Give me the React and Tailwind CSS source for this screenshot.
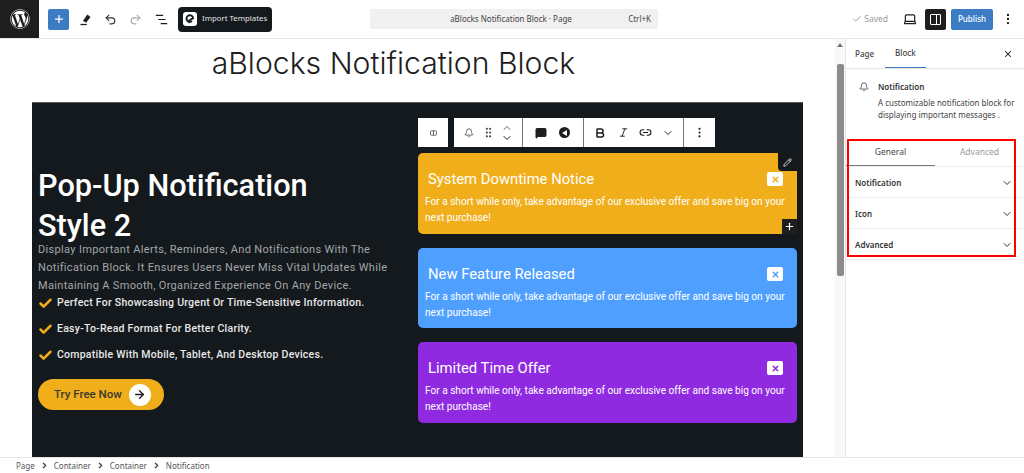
import { Plus, Undo2, Redo2, Check, Laptop, MoreVertical, X, Bell, ChevronDown, ChevronUp, ChevronRight, Bold, Italic, Link2, ArrowRight, Pencil, GripVertical, MessageSquare } from 'lucide-react'
import { FaWordpress } from 'react-icons/fa'

const CARDS = [
  { title: 'System Downtime Notice', bg: 'bg-[#f0ae1a]', x: 'text-[#f0ae1a]', h: 'h-[81px]' },
  { title: 'New Feature Released', bg: 'bg-[#4f9fff]', x: 'text-[#4f9fff]', h: 'h-[80px]' },
  { title: 'Limited Time Offer', bg: 'bg-[#902ae0]', x: 'text-[#902ae0]', h: 'h-[81px]' },
]

const FEATURES = [
  'Perfect For Showcasing Urgent Or Time-Sensitive Information.',
  'Easy-To-Read Format For Better Clarity.',
  'Compatible With Mobile, Tablet, And Desktop Devices.',
]

function Card({ title, bg, x, h, first }) {
  return (
    <div className={`relative ${h} ${bg} rounded-[5px] pl-[7px] pr-[14px] pt-[14px] text-white`}>
      <div className="flex items-center justify-between pl-[3px]">
        <span className="text-[14.8px] leading-[24px]">{title}</span>
        <span className="flex items-center justify-center w-[16px] h-[14px] bg-white rounded-[2px]">
          <X size={9} strokeWidth={4} className={x} />
        </span>
      </div>
      <p className="mt-[3px] text-[10.1px] leading-[15.5px] w-[366px]">
        For a short while only, take advantage of our exclusive offer and save big on your next purchase!
      </p>
      {first && (
        <>
          <span className="absolute top-0 right-0 w-[19px] h-[18px] bg-[#14191d] rounded-bl-[4px] flex items-center justify-center">
            <Pencil size={9} className="text-white" />
          </span>
          <span className="absolute bottom-0 right-0 w-[15px] h-[15px] bg-[#1e1e1e] flex items-center justify-center">
            <Plus size={11} strokeWidth={2.5} className="text-white" />
          </span>
        </>
      )}
    </div>
  )
}

function Toolbar() {
  return (
    <div className="flex h-[29px] gap-[6px] text-[#1e1e1e]">
      <div className="w-[30px] bg-white flex items-center justify-center">
        <svg viewBox="0 0 8 6" className="w-[7px] h-[6px]" fill="none" stroke="#555" strokeWidth="1">
          <rect x="0.5" y="0.5" width="7" height="5" rx="1" />
          <path d="M4 0.5v5" />
        </svg>
      </div>
      <div className="flex bg-white divide-x divide-[#777]">
        <div className="w-[69px] flex items-center pl-[10px]">
          <Bell size={10} className="text-[#444]" />
          <GripVertical size={13} className="ml-[8px] text-[#444]" />
          <div className="flex flex-col ml-[6px]">
            <ChevronUp size={12} className="text-[#666] -mb-[2px]" />
            <ChevronDown size={12} />
          </div>
        </div>
        <div className="w-[61px] flex items-center pl-[12px] gap-[12px]">
          <MessageSquare size={12} fill="#1e1e1e" />
          <span className="w-[11px] h-[11px] rounded-full bg-[#1e1e1e] flex items-center justify-center">
            <span className="w-0 h-0 border-y-[3px] border-y-transparent border-r-[5px] border-r-white" />
          </span>
        </div>
        <div className="w-[100px] flex items-center pl-[10px]">
          <Bold size={12} strokeWidth={3} />
          <Italic size={11} className="ml-[12px]" />
          <Link2 size={13} className="ml-[10px]" />
          <ChevronDown size={12} className="ml-[10px]" />
        </div>
        <div className="w-[31px] flex items-center justify-center">
          <MoreVertical size={13} />
        </div>
      </div>
    </div>
  )
}

function Header() {
  return (
    <header className="h-[39px] shrink-0 flex items-center border-b border-[#e6e6e6] bg-white text-[#1e1e1e]">
      <div className="w-[39px] h-[38px] bg-[#1e1e1e] flex items-center justify-center">
        <FaWordpress size={20} className="text-white" />
      </div>
      <div className="ml-[9px] w-[21px] h-[21px] bg-[#3b7cc4] rounded-[2px] flex items-center justify-center">
        <Plus size={12} strokeWidth={2.5} className="text-white" />
      </div>
      <svg viewBox="0 0 24 24" className="ml-[9px] w-[15px] h-[15px]" fill="#1e1e1e">
        <path d="M15 4l5 4-7 9-5-3z" />
        <rect x="4" y="19" width="10" height="2" />
      </svg>
      <Undo2 size={13} className="ml-[11px] text-[#333]" />
      <Redo2 size={13} className="ml-[12px] text-[#aaa]" />
      <svg viewBox="0 0 16 16" className="ml-[13px] w-[13px] h-[13px]" stroke="#1e1e1e" strokeWidth="1.4">
        <path d="M1 3h9M4 8h9M7 13h8" />
      </svg>
      <div className="ml-[10px] h-[25px] w-[94px] bg-[#14191d] rounded-[4px] flex items-center pl-[5px] text-white">
        <span className="w-[14px] h-[14px] bg-white rounded-[3px] flex items-center justify-center">
          <svg viewBox="0 0 12 12" className="w-[10px] h-[10px]" fill="none" stroke="#14191d" strokeWidth="2.2">
            <path d="M8.5 8.5A4 4 0 1 1 9.8 5L5.5 7.5L5 11" />
          </svg>
        </span>
        <span className="ml-[5px] text-[7.8px] whitespace-nowrap text-[#e5e5e5]">Import Templates</span>
      </div>
      <div className="ml-[98px] w-[288px] h-[20px] bg-[#f0f0f0] rounded-[2px] flex items-center relative text-[8px] text-[#444]">
        <span className="w-full text-center pr-[6px]">aBlocks Notification Block · Page</span>
        <span className="absolute right-[7px]">Ctrl+K</span>
      </div>
      <div className="ml-auto flex items-center">
        <Check size={10} className="text-[#888]" />
        <span className="ml-[2px] text-[8.5px] text-[#999]">Saved</span>
        <Laptop size={14} className="ml-[15px]" />
        <span className="ml-[8px] w-[21px] h-[21px] bg-[#1e1e1e] rounded-[2px] flex items-center justify-center">
          <span className="w-[11px] h-[11px] border border-white rounded-[1px] flex justify-end">
            <span className="w-[4px] h-full border-l border-white" />
          </span>
        </span>
        <span className="ml-[5px] w-[42px] h-[21px] bg-[#3b7cc4] rounded-[2px] text-white text-[8px] font-medium flex items-center justify-center">Publish</span>
        <MoreVertical size={14} className="ml-[8px] mr-[9px]" />
      </div>
    </header>
  )
}

function Sidebar() {
  return (
    <aside className="relative w-[179px] shrink-0 border-l border-[#e6e6e6] bg-white text-[#1e1e1e]">
      <div className="h-[30px] flex items-center border-b border-[#e6e6e6] relative text-[8px] font-medium">
        <span className="ml-[9px] text-[#444]">Page</span>
        <span className="ml-[11px] text-[#444] relative h-full flex items-center px-[10px] border-b border-[#3b7cc4]">Block</span>
        <X size={10} strokeWidth={2.5} className="absolute right-[11px]" />
      </div>
      <div className="flex pt-[12px] pl-[13px] h-[70px]">
        <Bell size={10} className="mt-[1px] text-[#444]" />
        <div className="ml-[9px] text-[8px] leading-[12px] w-[142px] text-[#444]">
          <div className="font-semibold mb-[4px] text-[#333]">Notification</div>
          <p>A customizable notification block for displaying important messages .</p>
        </div>
      </div>
      <div className="flex h-[28px] border-b border-[#eee] text-[8.5px]">
        <span className="w-[89px] flex items-center justify-center text-[#444] border-b border-[#777]">General</span>
        <span className="flex-1 flex items-center justify-center text-[#999]">Advanced</span>
      </div>
      {['Notification', 'Icon', 'Advanced'].map((label) => (
        <div key={label} className="h-[31px] pt-[1px] flex items-center justify-between pl-[9px] pr-[11px] border-b border-[#eee] last:border-b-0 text-[8px] font-semibold text-[#333]">
          <span>{label}</span>
          <ChevronDown size={12} />
        </div>
      ))}
      {/* annotation box drawn over the panel */}
      <div className="absolute top-[100px] left-[1px] w-[169px] h-[118px] border-2 border-[#f00] pointer-events-none" />
    </aside>
  )
}

export default function App() {
  return (
    <div className="w-[1024px] h-[473px] flex flex-col overflow-hidden bg-white font-['Noto_Sans',sans-serif]">
      <Header />
      <div className="flex-1 flex min-h-0">
        <main className="flex-1 flex min-w-0">
          <div className="flex-1 min-w-0 flex flex-col pl-[32px] pr-[32px]">
            <h1 className="h-[63px] shrink-0 pt-[4px] pr-[48px] text-center font-['Inter',sans-serif] font-light text-[30.2px] leading-[40px] text-[#1e1e1e]">
              aBlocks Notification Block
            </h1>
            <div className="flex-1 flex bg-[#14191d] border-t border-[#555] font-['Roboto',sans-serif]">
              <div className="w-[386px] pl-[6px] pt-[63px]">
                <h2 className="text-[30.7px] leading-[40px] font-medium text-white">
                  Pop-Up Notification
                  <br />
                  Style 2
                </h2>
                <p className="mt-[-5px] text-[11px] leading-[18px] tracking-[0.33px] text-[#a3a6a8]">
                  Display Important Alerts, Reminders, And Notifications With The Notification Block. It Ensures Users Never Miss Vital Updates While Maintaining A Smooth, Organized Experience On Any Device.
                </p>
                <ul className="mt-[-1px] flex flex-col gap-[8px]">
                  {FEATURES.map((f) => (
                    <li key={f} className="flex items-center h-[18px] text-[10.5px] font-medium tracking-[0.25px] text-[#e8e8e8] whitespace-nowrap">
                      <Check size={15} strokeWidth={4} className="text-[#f0ae1a] mr-[4px]" />
                      {f}
                    </li>
                  ))}
                </ul>
                <div className="mt-[15px] w-[126px] h-[31px] rounded-full bg-[#f0ae1a] flex items-center pl-[16px] text-[11.5px] font-medium text-[#3a3a30]">
                  Try Free Now
                  <span className="ml-[7px] w-[22px] h-[22px] rounded-full bg-white flex items-center justify-center">
                    <ArrowRight size={13} strokeWidth={2.5} className="text-[#1e1e1e]" />
                  </span>
                </div>
              </div>
              <div className="w-[379px] pt-[15px]">
                <Toolbar />
                <div className="mt-[6px] flex flex-col gap-[14px]">
                  {CARDS.map((c, i) => (
                    <Card key={c.title} {...c} first={i === 0} />
                  ))}
                </div>
              </div>
            </div>
          </div>
          <div className="w-[10px] shrink-0 bg-[#f8f8f8] flex flex-col items-center relative">
            <span className="mt-[4px] w-0 h-0 border-x-[3px] border-x-transparent border-b-[4px] border-b-[#777]" />
            <span className="mt-[17px] w-[7px] h-[212px] bg-[#8c8c8c] rounded-[2px]" />
          </div>
        </main>
        <Sidebar />
      </div>
      <footer className="h-[16px] shrink-0 flex items-center pl-[16px] border-t border-[#e6e6e6] text-[8px] text-[#555]">
        {['Page', 'Container', 'Container', 'Notification'].map((crumb, i) => (
          <span key={i} className="flex items-center">
            {i > 0 && <ChevronRight size={9} strokeWidth={3} className="mx-[5px] text-[#333]" />}
            {crumb}
          </span>
        ))}
      </footer>
    </div>
  )
}
